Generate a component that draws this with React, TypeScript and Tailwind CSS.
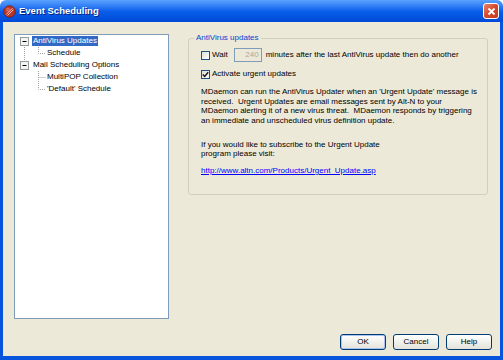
import React from "react";

const font = { fontFamily: '"Liberation Sans", Arial, sans-serif' };

const Checkbox = ({ checked }: { checked?: boolean }) => (
	<div className="w-[9px] h-[9px] border border-[#1C5180] bg-gradient-to-br from-[#DCDCD7] to-white flex items-center justify-center shrink-0">
		{checked && (
			<svg width="7" height="7" viewBox="0 0 7 7">
				<path d="M0.8 3.4 L2.7 5.4 L6.2 1.3" stroke="#1a1a1a" strokeWidth="1.5" fill="none" />
			</svg>
		)}
	</div>
);

const XpButton = ({ label, focused }: { label: string; focused?: boolean }) => (
	<button
		className={
			"w-[46px] h-[16px] rounded-[3px] border border-[#003C74] bg-gradient-to-b from-white to-[#E3E3DB] text-[8px] text-black flex items-center justify-center " +
			(focused ? "shadow-[inset_0_0_0_1px_#A9C3F0]" : "")
		}
	>
		{label}
	</button>
);

type TreeRow = { label: string; level: number; selected?: boolean };

const rows: TreeRow[] = [
	{ label: "AntiVirus Updates", level: 0, selected: true },
	{ label: "Schedule", level: 1 },
	{ label: "Mail Scheduling Options", level: 0 },
	{ label: "MultiPOP Collection", level: 1 },
	{ label: "'Default' Schedule", level: 1 },
];

//* dotted connector lines + the two [-] expanders
const TreeLines = () => (
	<svg className="absolute left-0 top-0" width="40" height="64" viewBox="0 0 40 64">
		<g stroke="#A0A0A0" strokeWidth="1" strokeDasharray="1 1" fill="none">
			<path d="M9.5 10 V27" />
			<path d="M23.5 12 V18.5 H31" />
			<path d="M23.5 36 V54.5 H31" />
			<path d="M23.5 42.5 H31" />
		</g>
		{[0, 24].map((y) => (
			<g key={y}>
				<rect x="5.5" y={2.5 + y} width="8" height="8" fill="#F4F4F0" stroke="#919B9C" />
				<path d={`M7.5 ${6.5 + y} H11.5`} stroke="#000" strokeWidth="1" />
			</g>
		))}
	</svg>
);

const App = () => {
	return (
		<div className="w-[503px] h-[360px] flex flex-col bg-white" style={font}>
			<div className="h-[22px] shrink-0 rounded-t-[6px] bg-gradient-to-b from-[#5AA2FF] via-[#0A5FEA] to-[#0049D6] flex items-center pl-[3px] pr-[4px]">
				<svg width="13" height="13" viewBox="0 0 13 13" className="shrink-0">
					<circle cx="6.5" cy="6.5" r="5.8" fill="#B7352A" stroke="#7A1A12" strokeWidth="0.8" />
					<circle cx="5" cy="4.8" r="2.2" fill="#E0705E" opacity="0.7" />
					<path d="M3.2 9.5 L9.5 3.2 M4.5 10.5 L10.3 4.7" stroke="#F6D2C8" strokeWidth="0.9" />
				</svg>
				<span className="ml-[3px] text-white font-bold text-[9.5px] [text-shadow:1px_1px_0_#0A1F7A]">Event Scheduling</span>
				<div className="ml-auto w-[16px] h-[16px] rounded-[3px] border border-white bg-gradient-to-br from-[#E9826A] via-[#D5492F] to-[#C33A22] flex items-center justify-center">
					<svg width="9" height="9" viewBox="0 0 9 9">
						<path d="M1.5 1.5 L7.5 7.5 M7.5 1.5 L1.5 7.5" stroke="white" strokeWidth="1.8" />
					</svg>
				</div>
			</div>
			<div className="flex-1 flex bg-[#0855DD] px-[3px] pb-[4px]">
				<div className="flex-1 bg-[#ECE9D8] flex flex-col pt-[12px] pl-[11px] pr-[8px] pb-[6px] text-[8px] text-black">
					<div className="flex items-start">
						<div className="relative w-[155px] h-[285px] bg-white border border-[#7F9DB9] shrink-0">
							<TreeLines />
							<div className="flex flex-col">
								{rows.map((r) => (
									<div
										key={r.label}
										className={"h-[12px] flex items-center " + (r.level === 0 ? "pl-[17px]" : "pl-[31px]")}
									>
										<span
											className={
												"px-[1px] h-[10px] leading-[10px] whitespace-nowrap " +
												(r.selected ? "bg-[#316AC5] text-white" : "")
											}
										>
											{r.label}
										</span>
									</div>
								))}
							</div>
						</div>
						<div className="relative ml-[19px] mt-[4px] w-[300px] h-[157px] border border-[#D0D0BF] rounded-[3px] pl-[12px] pt-[9px]">
							<span className="absolute -top-[6px] left-[5px] px-[2px] bg-[#ECE9D8] text-[#0046D5] leading-[10px]">
								AntiVirus updates
							</span>
							<div className="flex items-center h-[14px] whitespace-nowrap">
								<Checkbox />
								<span className="ml-[2px]">Wait</span>
								<div className="ml-[6px] w-[28px] h-[14px] border border-[#7F9DB9] bg-[#ECE9D8] text-[#ACA899] flex items-center justify-end pr-[2px]">
									240
								</div>
								<span className="ml-[4px]">minutes after the last AntiVirus update then do another</span>
							</div>
							<div className="flex items-center h-[10px] mt-[7px] whitespace-nowrap">
								<Checkbox checked />
								<span className="ml-[2px]">Activate urgent updates</span>
							</div>
							<p className="mt-[8px] leading-[9.5px] whitespace-nowrap">
								MDaemon can run the AntiVirus Updater when an 'Urgent Update' message is
								<br />
								received.&nbsp; Urgent Updates are email messages sent by Alt-N to your
								<br />
								MDaemon alerting it of a new virus threat.&nbsp; MDaemon responds by triggering
								<br />
								an immediate and unscheduled virus definition update.
							</p>
							<p className="mt-[14.5px] leading-[9.5px]">
								If you would like to subscribe to the Urgent Update
								<br />
								program please visit:
							</p>
							<p className="mt-[7.5px] leading-[9.5px]">
								<a className="text-[#0000FF] underline">http://www.altn.com/Products/Urgent_Update.asp</a>
							</p>
						</div>
					</div>
					<div className="mt-auto flex justify-end gap-[7px]">
						<XpButton label="OK" focused />
						<XpButton label="Cancel" />
						<XpButton label="Help" />
					</div>
				</div>
			</div>
		</div>
	);
};

export default App;
